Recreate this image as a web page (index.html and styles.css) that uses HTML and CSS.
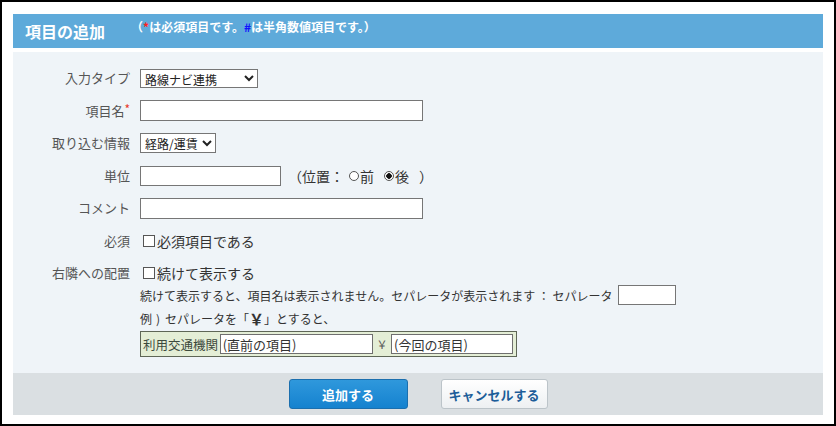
FILE: index.html
```html
<!DOCTYPE html>
<html lang="ja">
<head>
<meta charset="utf-8">
<title>項目の追加</title>
<link rel="stylesheet" href="styles.css">
</head>
<body>
<div class="frame">
  <div class="header">
    <span class="title">項目の追加</span>
    <span class="note">（<span class="req">*</span>は必須項目です。<span class="num">#</span>は半角数値項目です。）</span>
  </div>
  <div class="content">
    <div class="row">
      <label class="lbl">入力タイプ</label>
      <div class="field"><select class="sel sel-type"><option>路線ナビ連携</option></select></div>
    </div>
    <div class="row">
      <label class="lbl">項目名<span class="star">*</span></label>
      <div class="field"><input class="txt txt-wide" type="text"></div>
    </div>
    <div class="row">
      <label class="lbl">取り込む情報</label>
      <div class="field"><select class="sel sel-info"><option>経路/運賃</option></select></div>
    </div>
    <div class="row">
      <label class="lbl">単位</label>
      <div class="field">
        <input class="txt txt-unit" type="text">
        <span class="pos">（位置：<input class="radio" type="radio" name="pos">前<input class="radio radio2" type="radio" name="pos" checked>後<span class="close">）</span></span>
      </div>
    </div>
    <div class="row">
      <label class="lbl">コメント</label>
      <div class="field"><input class="txt txt-wide" type="text"></div>
    </div>
    <div class="row">
      <label class="lbl">必須</label>
      <div class="field"><label class="chk"><input class="cb" type="checkbox">必須項目である</label></div>
    </div>
    <div class="row row-multi">
      <label class="lbl lbl-top">右隣への配置</label>
      <div class="stack">
        <div class="line line1"><label class="chk"><input class="cb" type="checkbox">続けて表示する</label></div>
        <div class="line line2">続けて表示すると、項目名は表示されません。セパレータが表示されます ： セパレータ<input class="txt txt-sep" type="text"></div>
        <div class="line line3">例<span class="paren">)</span>セパレータを「<b class="yen-big">￥</b>」とすると、</div>
        <div class="example">
          <span class="ex-label">利用交通機関</span>
          <input class="txt ex-in1" type="text" value="(直前の項目)">
          <span class="ex-yen">￥</span>
          <input class="txt ex-in2" type="text" value="(今回の項目)">
        </div>
      </div>
    </div>
  </div>
  <div class="footer">
    <button class="btn primary">追加する</button>
    <button class="btn secondary">キャンセルする</button>
  </div>
</div>
</body>
</html>
```

FILE: styles.css
```css
* { box-sizing: border-box; }
html, body { margin: 0; padding: 0; background: #fff; }
body {
  font-family: "Noto Sans CJK JP", "Noto Sans", sans-serif;
  color: #333;
}
.frame {
  width: 836px;
  height: 426px;
  border: 2px solid #000;
  padding: 12px 11px 9px 11px;
  background: #fff;
}
.header {
  height: 34px;
  background: #5eaada;
  display: flex;
  align-items: center;
  padding-left: 12px;
  color: #fff;
  margin-bottom: 4px;
}
.title {
  font-size: 16px;
  font-weight: bold;
  line-height: 20px;
}
.note {
  font-size: 12px;
  font-weight: bold;
  line-height: 16px;
  margin-left: 26px;
  align-self: flex-start;
  margin-top: 5px;
}
.req { color: #ff2020; }
.num { color: #1010ff; }
.content {
  height: 321px;
  background: #eff4f8;
  padding: 10px 0 16px 0;
}
.row {
  display: grid;
  grid-template-columns: 117px 1fr;
  column-gap: 10px;
  height: 32.5px;
  align-items: center;
}
.lbl {
  text-align: right;
  font-size: 13px;
  color: #555;
  line-height: 18px;
  white-space: nowrap;
}
.star { color: #e8382c; font-size: 12px; vertical-align: top; position: relative; top: -2px; }
.field { display: flex; align-items: center; }
.sel {
  font-family: inherit;
  font-size: 12px;
  line-height: 15px;
  color: #222;
  background: #fff;
  border: 1px solid #767676;
  border-radius: 0;
  padding: 0;
  margin: 0;
}
.sel-type { width: 118px; height: 19px; }
.sel-info { width: 76px; height: 20px; }
.txt {
  font-family: inherit;
  font-size: 13px;
  color: #333;
  background: #fff;
  border: 1px solid #767676;
  border-radius: 0;
  padding: 0 2px;
  margin: 0;
  outline: none;
}
.txt-wide { width: 283px; height: 21px; }
.txt-unit { width: 141px; height: 20px; }
.pos {
  font-size: 14px;
  color: #333;
  margin-left: 7px;
  display: inline-flex;
  align-items: center;
  white-space: pre;
}
.radio {
  appearance: none;
  -webkit-appearance: none;
  width: 10px;
  height: 10px;
  border: 1px solid #555;
  border-radius: 50%;
  margin: 0 1px 0 5px;
  background: #fff;
}
.radio2 { margin-left: 10px; }
.close { margin-left: 10px; }
.radio:checked {
  background: radial-gradient(circle, #111 0 2.5px, #fff 3px);
}
.chk {
  font-size: 14px;
  color: #333;
  display: inline-flex;
  align-items: center;
  line-height: 20px;
}
.cb {
  appearance: none;
  -webkit-appearance: none;
  width: 12px;
  height: 12px;
  border: 1px solid #555;
  border-radius: 0;
  background: #fff;
  margin: 0 2px 0 3px;
}
.row-multi {
  height: auto;
  align-items: start;
  padding-top: 5px;
}
.lbl-top { line-height: 22px; }
.stack { display: flex; flex-direction: column; }
.line { display: flex; align-items: center; font-size: 12px; color: #333; white-space: pre; }
.line1 { height: 22px; }
.line2 { height: 22px; }
.line3 { height: 25px; }
.paren { margin: 0 5px 0 4px; }
.txt-sep { width: 58px; height: 20px; margin-left: 5px; }
.yen-big { font-size: 15px; font-weight: bold; }
.example {
  width: 377px;
  height: 26px;
  border: 1px solid #5e6656;
  background: #e4eed6;
  display: flex;
  align-items: center;
  padding: 0 3px 0 2px;
}
.ex-label { font-size: 12.5px; color: #3d4a3d; white-space: nowrap; width: 77px; }
.ex-in1 { width: 154px; height: 20px; border-color: #6f6f6f; }
.ex-in2 { width: 122px; height: 20px; border-color: #6f6f6f; }
.ex-yen { width: 18px; text-align: center; font-size: 11px; color: #555; }
.footer {
  height: 42px;
  background: #dadfe2;
  display: flex;
  align-items: center;
  justify-content: center;
  gap: 33px;
}
.btn {
  font-family: inherit;
  font-size: 13px;
  font-weight: bold;
  height: 30px;
  border-radius: 3px;
  padding: 0;
  margin: 0;
}
.primary {
  width: 119px;
  color: #fff;
  border: 1px solid #1b6fae;
  background: linear-gradient(#2f98dc, #1582cf);
}
.secondary {
  width: 107px;
  color: #1c5d99;
  border: 1px solid #bcc4c9;
  background: linear-gradient(#ffffff, #edf0f2);
}
```
